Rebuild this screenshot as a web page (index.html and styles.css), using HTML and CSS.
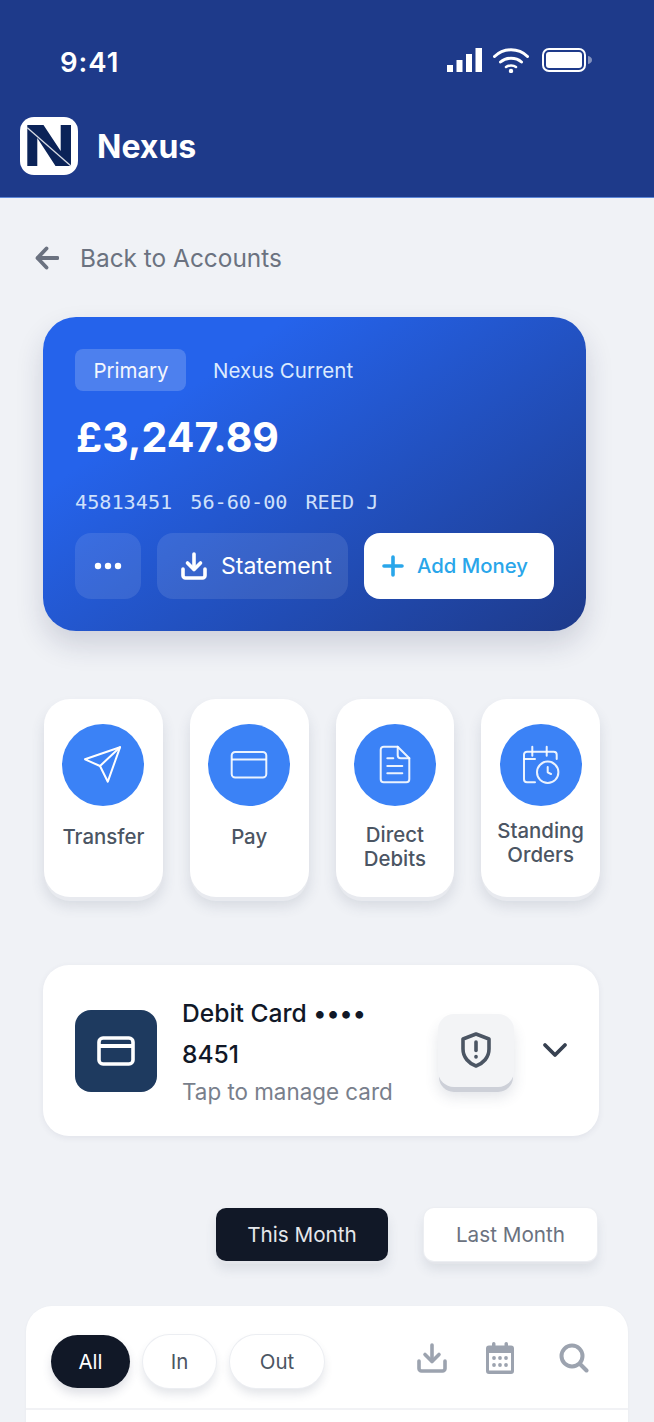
FILE: index.html
```html
<!DOCTYPE html>
<html lang="en">
<head>
<meta charset="utf-8">
<title>Nexus</title>
<link rel="stylesheet" href="styles.css">
</head>
<body>
<header class="app-header">
  <div class="status-bar">
    <span class="time">9:41</span>
    <div class="status-icons">
      <svg class="signal" width="35" height="24" viewBox="0 0 35 24"><rect x="0" y="17" width="6" height="7" fill="#fff"/><rect x="9.500" y="12" width="6" height="12" fill="#fff"/><rect x="19" y="6" width="6" height="18" fill="#fff"/><rect x="28.500" y="0" width="6.500" height="24" fill="#fff"/></svg>
      <svg class="wifi" width="36" height="26" viewBox="0 0 36 26" fill="none" stroke="#fff" stroke-width="3" stroke-linecap="round"><path d="M1.500 9.500C10.500 .5 25.500 .5 34.500 9.500"/><path d="M7.500 15C13 10 23 10 28.500 15"/><path d="M13 20C15.500 18 20.500 18 23 20" stroke-width="2.500"/><circle cx="18" cy="24" r="2.200" fill="#fff" stroke="none"/></svg>
      <svg class="battery" width="50" height="24" viewBox="0 0 50 24"><rect x="1" y="1" width="42" height="22" rx="6" fill="none" stroke="#fff" stroke-width="2"/><rect x="4" y="4" width="36" height="16" rx="3" fill="#fff"/><path d="M46 8c2.500 .5 4 2 4 4s-1.500 3.500-4 4z" fill="#fff" opacity=".45"/></svg>
    </div>
  </div>
  <div class="brand">
    <svg class="logo" width="58" height="58" viewBox="0 0 58 58"><rect width="58" height="58" rx="14" fill="#fff"/><path d="M7.300 8H23.500L40.700 34V8H51V49H35.500L17.300 21V49H7.300z" fill="#0b2358"/><path d="M7.300 10.700L51 49" stroke="#d8dce4" stroke-width="1.300"/></svg>
    <span class="brand-name">Nexus</span>
  </div>
</header>

<main class="page">
  <a class="back-link">
    <svg width="24" height="24" viewBox="0 0 24 24" fill="none" stroke="#6b7280" stroke-width="3.800" stroke-linecap="round" stroke-linejoin="round"><path d="M22.500 12H3"/><path d="M11.500 2.500L2.500 12 11.500 21.500"/></svg>
    <span>Back to Accounts</span>
  </a>

  <section class="account-card">
    <div class="account-top">
      <span class="badge">Primary</span>
      <span class="account-name">Nexus Current</span>
    </div>
    <div class="balance">£3,247.89</div>
    <div class="account-meta"><span>45813451</span><span>56-60-00</span><span>REED J</span></div>
    <div class="account-actions">
      <button class="btn-ghost btn-more"><svg width="28" height="8" viewBox="0 0 28 8" fill="#fff"><circle cx="4" cy="4" r="3.200"/><circle cx="14" cy="4" r="3.200"/><circle cx="24" cy="4" r="3.200"/></svg></button>
      <button class="btn-ghost btn-statement">
        <svg width="26" height="28" viewBox="0 0 26 28" fill="none" stroke="#fff" stroke-width="3.600" stroke-linecap="round" stroke-linejoin="round"><path d="M13 2V17"/><path d="M6.500 11L13 17.500 19.500 11"/><path d="M2 17V23.500A2.500 2.500 0 0 0 4.500 26H21.500A2.500 2.500 0 0 0 24 23.500V17"/></svg>
        <span>Statement</span>
      </button>
      <button class="btn-white">
        <svg width="22" height="22" viewBox="0 0 22 22" fill="none" stroke="#29a6ea" stroke-width="3.600" stroke-linecap="round"><path d="M11 2V20M2 11H20"/></svg>
        <span>Add Money</span>
      </button>
    </div>
  </section>

  <section class="quick-actions">
    <div class="tile">
      <div class="tile-icon"><svg width="40" height="40" viewBox="0 0 40 40" fill="none" stroke="#fff" stroke-width="2" stroke-linejoin="round" stroke-linecap="round"><path d="M37 2.300L2 14.300 17 21 24.800 36.700z"/><path d="M17 21L37 2.300"/></svg></div>
      <div class="tile-label tile-label-one">Transfer</div>
    </div>
    <div class="tile">
      <div class="tile-icon"><svg width="40" height="40" viewBox="0 0 40 40" fill="none" stroke="#fff" stroke-opacity=".9" stroke-width="2"><rect x="2.700" y="7" width="34.600" height="25.600" rx="3.500"/><path d="M2.700 14.500H37.300"/></svg></div>
      <div class="tile-label tile-label-one">Pay</div>
    </div>
    <div class="tile">
      <div class="tile-icon"><svg width="40" height="40" viewBox="0 0 40 40" fill="none" stroke="#fff" stroke-opacity=".9" stroke-width="2" stroke-linejoin="round" stroke-linecap="round"><path d="M8.700 1.700H22.700L34.300 13.300V34.300A3 3 0 0 1 31.300 37.300H8.700A3 3 0 0 1 5.700 34.300V4.700A3 3 0 0 1 8.700 1.700Z"/><path d="M22.700 1.700V10.300A3 3 0 0 0 25.700 13.300H34.300"/><path d="M12.300 13.300H18.300M12.300 21H27.300M12.300 28.300H27.300"/></svg></div>
      <div class="tile-label tile-label-two">Direct<br>Debits</div>
    </div>
    <div class="tile">
      <div class="tile-icon"><svg width="40" height="40" viewBox="0 0 40 40" fill="none" stroke="#fff" stroke-opacity=".9" stroke-width="2" stroke-linejoin="round" stroke-linecap="round"><path d="M14 37.300H6A3 3 0 0 1 3 34.300V9.700A3 3 0 0 1 6 6.700H32.700A3 3 0 0 1 35.700 9.700V14"/><path d="M11.300 1.700V10.700M25.700 1.700V10.700M3 14H14"/><circle cx="26.700" cy="27.300" r="10.700"/><path d="M26.700 22V27.300L30 29"/></svg></div>
      <div class="tile-label tile-label-high">Standing<br>Orders</div>
    </div>
  </section>

  <section class="debit-panel">
    <div class="debit-icon"><svg width="38" height="30" viewBox="0 0 38 30" fill="none" stroke="#fff" stroke-width="3.600" stroke-linejoin="round"><rect x="2" y="2" width="34" height="26" rx="4"/><path d="M2 10H36" stroke-width="3.800"/></svg></div>
    <div class="debit-text">
      <div class="debit-title">Debit Card ••••</div>
      <div class="debit-title debit-number">8451</div>
      <div class="debit-hint">Tap to manage card</div>
    </div>
    <button class="shield-btn"><svg width="30" height="36" viewBox="0 0 30 36" fill="none" stroke="#4b5563" stroke-width="3.600" stroke-linecap="round" stroke-linejoin="round"><path d="M15 2L28 7V17C28 25.500 22 31.500 15 34 8 31.500 2 25.500 2 17V7z"/><path d="M15 10V18.500"/><path d="M15 24.500V25"/></svg></button>
    <svg class="chevron" width="26" height="16" viewBox="0 0 26 16" fill="none" stroke="#374151" stroke-width="3.800" stroke-linecap="round" stroke-linejoin="round"><path d="M3 3L13 13 23 3"/></svg>
  </section>

  <div class="period-tabs">
    <button class="period period-active">This Month</button>
    <button class="period">Last Month</button>
  </div>

  <section class="transactions">
    <div class="filter-row">
      <button class="pill pill-active">All</button>
      <button class="pill pill-in">In</button>
      <button class="pill pill-out">Out</button>
      <div class="filter-tools">
        <svg width="30" height="30" viewBox="0 0 30 30" fill="none" stroke="#9ca3af" stroke-width="3.600" stroke-linecap="round" stroke-linejoin="round"><path d="M15 2V18"/><path d="M8 11.500L15 18.500 22 11.500"/><path d="M2 18V25.500A2.500 2.500 0 0 0 4.500 28H25.500A2.500 2.500 0 0 0 28 25.500V18"/></svg>
        <svg class="tool-cal" width="28" height="32" viewBox="0 0 28 32"><path d="M3 3.500H25A3 3 0 0 1 28 6.500V29A3 3 0 0 1 25 32H3A3 3 0 0 1 0 29V6.500A3 3 0 0 1 3 3.500Z" fill="#9ca3af"/><rect x="6" y="0" width="3.500" height="7" rx="1.700" fill="#9ca3af"/><rect x="18.500" y="0" width="3.500" height="7" rx="1.700" fill="#9ca3af"/><rect x="3" y="11" width="22" height="17.500" fill="#fff"/><g fill="#9ca3af"><circle cx="8" cy="16" r="1.900"/><circle cx="14" cy="16" r="1.900"/><circle cx="20" cy="16" r="1.900"/><circle cx="8" cy="23" r="1.900"/><circle cx="14" cy="23" r="1.900"/><circle cx="20" cy="23" r="1.900"/></g></svg>
        <svg class="tool-search" width="30" height="30" viewBox="0 0 30 30" fill="none" stroke="#9ca3af" stroke-width="4" stroke-linecap="round"><circle cx="13" cy="13" r="10.500"/><path d="M21 21L27.500 27.500"/></svg>
      </div>
    </div>
  </section>
</main>
</body>
</html>
```
FILE: styles.css
```css
* { box-sizing: border-box; }
html, body { margin: 0; height: 1422px; overflow: hidden; }
body { background: #f0f2f6; font-family: Inter, "Liberation Sans", sans-serif; color: #111827; }
button { font-family: inherit; border: 0; padding: 0; margin: 0; cursor: pointer; }

.app-header { height: 198px; background: #1e3a8a; border-bottom: 1px solid #5d87d8; }
.status-bar { height: 116px; padding: 47px 62px 0 60px; display: flex; justify-content: space-between; align-items: flex-start; }
.time { color: #fff; font-size: 27.500px; font-weight: 600; line-height: 30px; letter-spacing: 1px; }
.status-icons { display: flex; align-items: flex-start; }
.signal { margin-top: 1px; }
.wifi { margin-left: 11px; }
.battery { margin-left: 13px; margin-top: 1px; }
.brand { display: flex; align-items: center; gap: 19px; padding-left: 20px; }
.brand-name { color: #fff; font-size: 32px; font-weight: 700; line-height: 58px; margin-top: 2px; }

.page { padding: 46px 54px 0 43px; }
.back-link { display: flex; align-items: center; gap: 21px; margin-left: -8px; height: 28px; color: #6b7280; font-size: 24.400px; line-height: 28px; }

.account-card { width: 543px; height: 314px; margin-top: 45px; border-radius: 33px; padding: 32px 32px 0; background: linear-gradient(145deg, #2563eb 25%, #1e3a8a 100%); box-shadow: 0 14px 28px rgba(30, 40, 80, .16); }
.account-top { display: flex; align-items: center; gap: 27px; }
.badge { width: 111px; height: 42px; border-radius: 8px; padding: 1px 0 0 1px; background: rgba(255, 255, 255, .2); color: #fff; font-size: 20.500px; line-height: 42px; text-align: center; opacity: .95; }
.account-name { color: #dbeafe; font-size: 20.500px; margin-top: 1px; }
.balance { margin: 21px 0 0 1px; color: #fff; font-size: 41px; font-weight: 700; line-height: 50px; }
.account-meta { display: flex; gap: 18px; margin-top: 28px; color: #cfe0fb; font-family: "DejaVu Sans Mono", monospace; font-size: 20.200px; line-height: 24px; }
.account-actions { display: flex; gap: 16px; margin-top: 19px; }
.btn-ghost { height: 66px; border-radius: 16px; background: rgba(255, 255, 255, .1); color: #fff; display: flex; align-items: center; justify-content: center; }
.btn-more { width: 66px; }
.btn-statement { width: 191px; gap: 14px; justify-content: flex-start; padding: 0 0 1px 24px; font-size: 23px; font-weight: 400; }
.btn-white { width: 190px; height: 66px; border-radius: 16px; background: #fff; color: #29a6ea; display: flex; align-items: center; gap: 13px; padding: 0 0 1px 18px; font-size: 20.300px; font-weight: 500; }

.quick-actions { display: flex; gap: 27px; margin: 68px 0 0 1px; }
.tile { flex: 1 1 0; height: 198px; border-radius: 26px; background: #fff; padding-top: 25px; text-align: center; box-shadow: 0 5px 0 -1px #e8eaef, 0 9px 14px rgba(60, 70, 100, .14); }
.tile-icon { width: 82px; height: 82px; border-radius: 50%; background: #3b82f6; margin: 0 auto; display: flex; align-items: center; justify-content: center; }
.tile-label { color: #4b5563; font-size: 20.400px; font-weight: 450; line-height: 24px; }
.tile-label-one { margin-top: 19px; }
.tile-label-two { margin-top: 17px; }
.tile-label-high { margin-top: 13px; }

.debit-panel { display: flex; align-items: center; width: 556px; height: 171px; margin-top: 68px; padding: 0 31px 0 32px; border-radius: 26px; background: #fff; box-shadow: 0 2px 6px rgba(60, 70, 100, .08); }
.debit-icon { width: 82px; height: 82px; flex: none; border-radius: 16px; background: #1e3a5f; display: flex; align-items: center; justify-content: center; }
.debit-text { flex: 1; margin-left: 25px; }
.debit-title { font-size: 24.600px; font-weight: 450; line-height: 41px; color: #111827; }
.debit-hint { color: #6b7280; font-size: 22.400px; line-height: 34px; opacity: .9; }
.shield-btn { width: 76px; height: 73px; flex: none; border-radius: 16px; background: #f3f4f6; display: flex; align-items: center; justify-content: center; box-shadow: 0 6px 0 -1px #cdd0d8, 0 10px 14px rgba(60, 70, 100, .14); margin: -1px -3px 0 0; }
.chevron { flex: none; margin-left: 31px; margin-top: -2px; }

.period-tabs { display: flex; justify-content: flex-end; gap: 36px; margin: 72px 3px 0 0; }
.period { width: 173px; height: 53px; border-radius: 10px; background: #fff; color: #6b7280; font-size: 20.700px; box-shadow: 0 0 0 1px #eceef2, 0 4px 0 -1px #e3e5ea, 0 8px 12px rgba(60, 70, 100, .12); }
.period-active { background: #111827; color: #e5e7eb; width: 172px; box-shadow: 0 4px 0 -1px #e3e5ea, 0 8px 12px rgba(60, 70, 100, .12); }

.transactions { margin: 45px 0 0 -17px; width: 602px; height: 116px; background: #fff; border-radius: 26px 26px 0 0; box-shadow: 0 1px 3px rgba(60, 70, 100, .05); }
.filter-row { display: flex; align-items: center; height: 104px; padding: 8px 39px 0 25px; border-bottom: 2px solid #f1f2f5; }
.pill { height: 53px; border-radius: 27px; background: #fff; color: #4b5563; font-size: 20.500px; box-shadow: 0 0 0 1px #eceef2, 0 6px 10px rgba(60, 70, 100, .14); }
.pill-active { width: 79px; background: #111827; color: #fff; box-shadow: 0 6px 10px rgba(60, 70, 100, .16); }
.pill-in { width: 73px; margin-left: 13px; }
.pill-out { width: 94px; margin-left: 14px; }
.filter-tools { margin: -6px 0 0 auto; display: flex; align-items: center; }
.tool-cal { margin-left: 39px; }
.tool-search { margin-left: 45px; }
```
